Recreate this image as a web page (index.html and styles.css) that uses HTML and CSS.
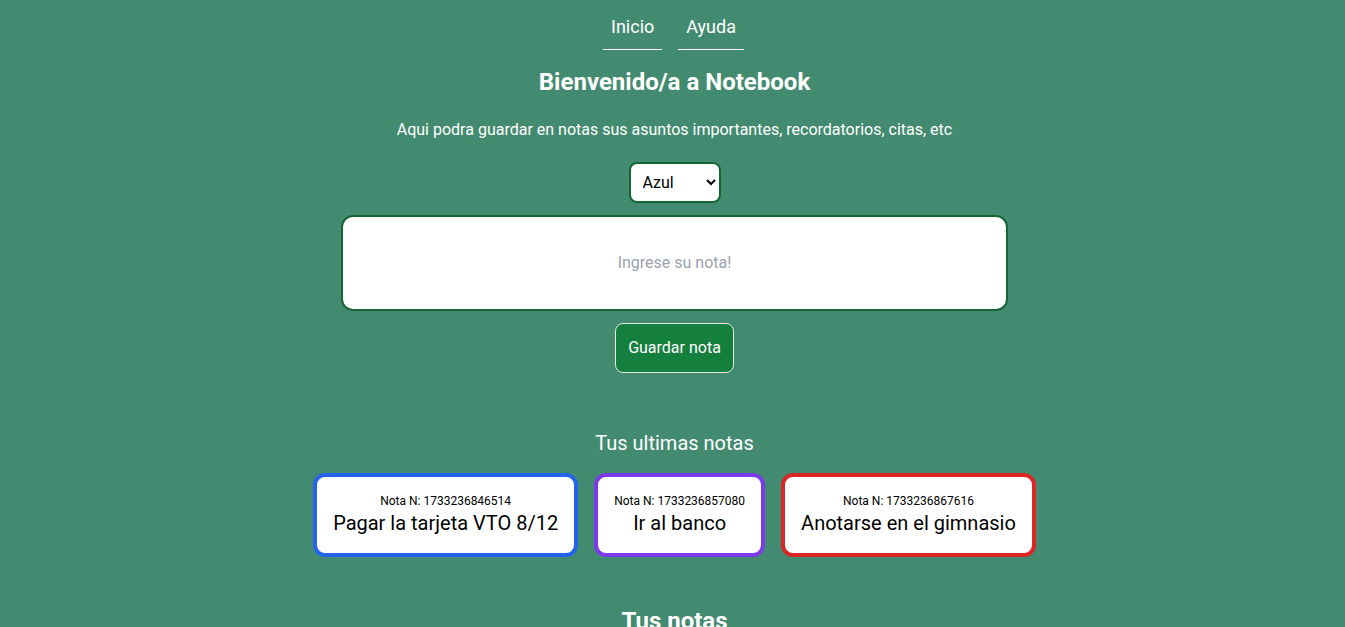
FILE: index.html
```html
<!DOCTYPE html>
<html lang="es">
<head>
<meta charset="utf-8">
<title>Notebook</title>
<link rel="stylesheet" href="styles.css">
</head>
<body>
<nav class="nav">
  <a class="nav-link" href="#inicio">Inicio</a>
  <a class="nav-link" href="#ayuda">Ayuda</a>
</nav>
<main class="page">
  <h1 class="title">Bienvenido/a a Notebook</h1>
  <p class="intro">Aqui podra guardar en notas sus asuntos importantes, recordatorios, citas, etc</p>
  <form class="note-form">
    <select class="color-select" aria-label="Color de la nota">
      <option>Azul</option>
      <option>Violeta</option>
      <option>Rojo</option>
    </select>
    <input class="note-input" type="text" placeholder="Ingrese su nota!" aria-label="Nota">
    <button class="save-button" type="button">Guardar nota</button>
  </form>
  <section class="recent">
    <h2 class="recent-title">Tus ultimas notas</h2>
    <div class="cards">
      <article class="card card-blue">
        <p class="card-id">Nota N: 1733236846514</p>
        <p class="card-text">Pagar la tarjeta VTO 8/12</p>
      </article>
      <article class="card card-violet">
        <p class="card-id">Nota N: 1733236857080</p>
        <p class="card-text">Ir al banco</p>
      </article>
      <article class="card card-red">
        <p class="card-id">Nota N: 1733236867616</p>
        <p class="card-text">Anotarse en el gimnasio</p>
      </article>
    </div>
  </section>
  <h2 class="title">Tus notas</h2>
</main>
</body>
</html>
```
FILE: styles.css
```css
* { box-sizing: border-box; margin: 0; padding: 0; }
body {
  min-height: 100vh;
  background: #438b70;
  color: #fff;
  font-family: Roboto, sans-serif;
  font-size: 16px;
  line-height: 24px;
  text-align: center;
}
/* The page scrolls without a visible bar. */
html { scrollbar-width: none; }
.nav { display: flex; justify-content: center; gap: 16px; padding: 4px 0 0 2px; }
.nav-link {
  padding: 8px 8px 7px;
  border-bottom: 1px solid #fff;
  color: #fff;
  font-size: 18px;
  line-height: 30px;
  text-decoration: none;
}
.page { padding: 16px 4px 16px 8px; }
.title { font-size: 24px; line-height: 32px; font-weight: 700; }
.intro { margin-top: 20px; }
.note-form { display: flex; flex-direction: column; align-items: center; gap: 12px; margin-top: 20px; }
.color-select {
  width: 92px;
  height: 41px;
  padding: 8px 0 8px 8px;
  border: 2px solid #166534;
  border-radius: 8px;
  background: #fff;
  color: #000;
  font: inherit;
}
.note-input {
  width: 50%;
  height: 96px;
  padding: 8px 8px 10px;
  border: 2px solid #166534;
  border-radius: 12px;
  background: #fff;
  color: #000;
  font: inherit;
  text-align: center;
}
.note-input::placeholder { color: #9ca3af; }
.save-button {
  padding: 12px;
  border: 1px solid #e5e7eb;
  border-radius: 8px;
  background: #15803d;
  color: #fff;
  font: inherit;
}
.recent { margin: 56px 0 48px; }
.recent-title { font-size: 20px; line-height: 28px; font-weight: 400; }
.cards { display: flex; flex-wrap: wrap; justify-content: center; gap: 16px; margin-top: 16px; }
.card { padding: 16px; border: 4px solid; border-radius: 12px; background: #fff; }
.card-blue { border-color: #2563eb; }
.card-violet { border-color: #7c3aed; }
.card-red { border-color: #dc2626; }
.card-id { color: #000; font-size: 12px; line-height: 16px; }
.card-text { color: #000; font-size: 20px; line-height: 28px; }
```
